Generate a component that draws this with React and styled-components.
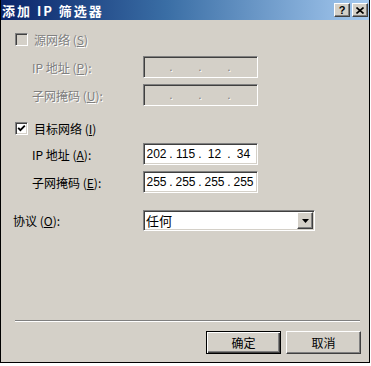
import React from "react";
import styled, { createGlobalStyle, css } from "styled-components";

const Global = createGlobalStyle`
  body {
    margin: 0;
    background: #ffffff;
  }
  * {
    box-sizing: border-box;
  }
`;

const sunken = css`
  border-style: solid;
  border-width: 1px;
  border-color: #808080 #ffffff #ffffff #808080;
  box-shadow: inset 1px 1px 0 #404040, inset -1px -1px 0 #d4d0c8;
`;

const raised = css`
  border-style: solid;
  border-width: 1px;
  border-color: #ffffff #404040 #404040 #ffffff;
  box-shadow: inset -1px -1px 0 #808080;
`;

const Window = styled.div`
  width: 370px;
  height: 363px;
  display: flex;
  flex-direction: column;
  background: #d4d0c8;
  border: 1px solid #000;
  border-top: none;
  font-family: "Noto Sans CJK SC", sans-serif;
  font-size: 12px;
  color: #000;
`;

const TitleBar = styled.div`
  height: 20px;
  flex: none;
  display: flex;
  align-items: center;
  justify-content: space-between;
  padding: 0 1px 0 1px;
  background: linear-gradient(to right, #0a246a 0%, #3a6ea5 45%, #a6caf0 100%);
`;

const Title = styled.span`
  color: #fff;
  font-weight: bold;
  font-size: 13px;
  letter-spacing: 2px;
  white-space: pre;
`;

const CaptionButtons = styled.div`
  display: flex;
  gap: 2px;
`;

const CaptionButton = styled.div`
  width: 16px;
  height: 14px;
  background: #d4d0c8;
  ${raised};
  display: flex;
  align-items: center;
  justify-content: center;
  font-family: "Liberation Sans", sans-serif;
  font-weight: bold;
  font-size: 11px;
  line-height: 1;
`;

const Body = styled.div`
  flex: 1;
  display: flex;
  flex-direction: column;
  padding: 13px 8px 8px 12px;
`;

const Group = styled.div`
  display: flex;
  flex-direction: column;
  margin-top: ${(p) => p.$top || 0}px;
`;

const CheckRow = styled.label`
  display: flex;
  align-items: center;
  gap: 6px;
  margin-left: 2px;
  height: 13px;
  color: ${(p) => (p.$disabled ? "#808080" : "#000")};
  text-shadow: ${(p) => (p.$disabled ? "1px 1px 0 #fff" : "none")};
`;

const Box = styled.span`
  width: 13px;
  height: 13px;
  flex: none;
  ${sunken};
  background: ${(p) => (p.$disabled ? "#d4d0c8" : "#fff")};
  display: flex;
  align-items: center;
  justify-content: center;
`;

const Fields = styled.div`
  display: flex;
  flex-direction: column;
  gap: 6px;
  margin-top: ${(p) => p.$top}px;
`;

const FieldRow = styled.div`
  display: grid;
  grid-template-columns: 130px ${(p) => p.$width || 115}px;
  align-items: center;
`;

const Label = styled.span`
  padding-left: ${(p) => p.$indent || 0}px;
  color: ${(p) => (p.$disabled ? "#808080" : "#000")};
  text-shadow: ${(p) => (p.$disabled ? "1px 1px 0 #fff" : "none")};
  white-space: pre;
`;

const IpBox = styled.div`
  height: 22px;
  ${sunken};
  background: ${(p) => (p.$disabled ? "#d4d0c8" : "#fff")};
  display: flex;
  align-items: center;
  padding-left: 1px;
  font-family: "Liberation Sans", sans-serif;
  font-size: 12px;
  color: ${(p) => (p.$disabled ? "#808080" : "#000")};
  text-shadow: ${(p) => (p.$disabled ? "1px 1px 0 #fff" : "none")};
`;

const Octet = styled.span`
  width: 23px;
  text-align: center;
`;

const Dot = styled.span`
  width: 6px;
  text-align: center;
`;

const Select = styled.div`
  height: 21px;
  ${sunken};
  background: #fff;
  display: flex;
  align-items: center;
  justify-content: space-between;
  padding: 0 1px 0 2px;
  font-size: 13px;
`;

const ArrowButton = styled.span`
  width: 16px;
  height: 17px;
  background: #d4d0c8;
  ${raised};
  display: flex;
  align-items: center;
  justify-content: center;
`;

const Footer = styled.div`
  margin-top: auto;
  display: flex;
  flex-direction: column;
  gap: 9px;
`;

const Separator = styled.div`
  height: 2px;
  margin: 0 1px 0 2px;
  border-top: 1px solid #808080;
  border-bottom: 1px solid #ffffff;
`;

const Buttons = styled.div`
  display: flex;
  justify-content: flex-end;
  gap: 5px;
`;

const Button = styled.button`
  width: 75px;
  height: 23px;
  padding: 0;
  background: #d4d0c8;
  font-family: "Noto Sans CJK SC", sans-serif;
  font-size: 12px;
  color: #000;
  ${(p) =>
    p.$default
      ? css`
          border: 1px solid #000;
          box-shadow: inset 1px 1px 0 #fff, inset -1px -1px 0 #404040,
            inset -2px -2px 0 #808080;
        `
      : raised};
`;

const Check = () => (
  <svg width="9" height="9" viewBox="0 0 9 9">
    <path d="M1.2 3.8 L3.4 6.2 L7.8 1.6" fill="none" stroke="#000" strokeWidth="1.8" />
  </svg>
);

const IpControl = ({ values, disabled }) => (
  <IpBox $disabled={disabled}>
    {[0, 1, 2, 3].map((i) => (
      <React.Fragment key={i}>
        {i > 0 && <Dot>.</Dot>}
        <Octet>{values ? values[i] : ""}</Octet>
      </React.Fragment>
    ))}
  </IpBox>
);

const u = (c) => <u>{c}</u>;

export default function App() {
  return (
    <>
      <Global />
      <Window>
        <TitleBar>
          <Title>添加 IP 筛选器</Title>
          <CaptionButtons>
            <CaptionButton>?</CaptionButton>
            <CaptionButton>
              <svg width="8" height="7" viewBox="0 0 8 7">
                <path d="M0.5 0.5 L7.5 6.5 M7.5 0.5 L0.5 6.5" stroke="#000" strokeWidth="1.6" />
              </svg>
            </CaptionButton>
          </CaptionButtons>
        </TitleBar>
        <Body>
          <Group>
            <CheckRow $disabled>
              <Box $disabled />
              <span>源网络 ({u("S")})</span>
            </CheckRow>
            <Fields $top={10}>
              <FieldRow>
                <Label $indent={19} $disabled>IP 地址 ({u("P")}):</Label>
                <IpControl disabled />
              </FieldRow>
              <FieldRow>
                <Label $indent={19} $disabled>子网掩码 ({u("U")}):</Label>
                <IpControl disabled />
              </FieldRow>
            </Fields>
          </Group>
          <Group $top={16}>
            <CheckRow>
              <Box>
                <Check />
              </Box>
              <span>目标网络 ({u("I")})</span>
            </CheckRow>
            <Fields $top={8}>
              <FieldRow>
                <Label $indent={19}>IP 地址 ({u("A")}):</Label>
                <IpControl values={["202", "115", "12", "34"]} />
              </FieldRow>
              <FieldRow>
                <Label $indent={19}>子网掩码 ({u("E")}):</Label>
                <IpControl values={["255", "255", "255", "255"]} />
              </FieldRow>
            </Fields>
          </Group>
          <Group $top={17}>
            <FieldRow $width={172}>
              <Label>协议 ({u("O")}):</Label>
              <Select>
                <span>任何</span>
                <ArrowButton>
                  <svg width="7" height="4" viewBox="0 0 7 4">
                    <path d="M0 0 H7 L3.5 4 Z" fill="#000" />
                  </svg>
                </ArrowButton>
              </Select>
            </FieldRow>
          </Group>
          <Footer>
            <Separator />
            <Buttons>
              <Button $default>确定</Button>
              <Button>取消</Button>
            </Buttons>
          </Footer>
        </Body>
      </Window>
    </>
  );
}
